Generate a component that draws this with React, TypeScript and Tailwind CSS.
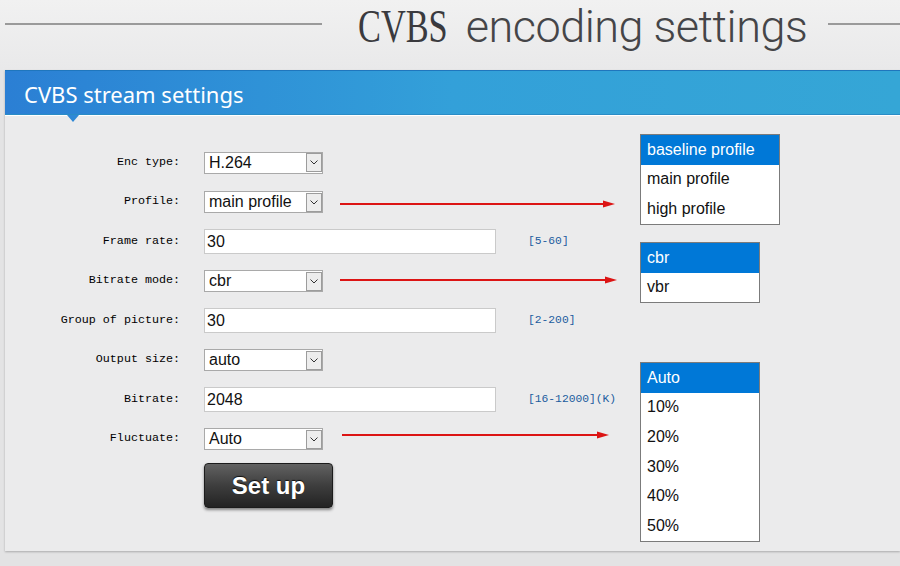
import React from "react";

const mono = { fontFamily: '"Liberation Mono", "DejaVu Sans Mono", monospace' };
const sans = { fontFamily: '"Liberation Sans", Arial, sans-serif' };

function Chevron() {
  return (
    <svg width="8" height="5" viewBox="0 0 8 5" className="block">
      <path d="M0.5 0.5 L4 4 L7.5 0.5" fill="none" stroke="#333" strokeWidth="1" />
    </svg>
  );
}

function Select({ value }: { value: string }) {
  return (
    <div className="w-[119px] h-[22px] border border-[#a9a9a9] bg-white flex items-center">
      <span className="pl-[4px] text-[16px] leading-none text-[#111] flex-1 whitespace-nowrap" style={sans}>
        {value}
      </span>
      <div className="w-[16px] h-[19px] border border-[#9c9c9c] bg-[#ededed] flex items-center justify-center">
        <Chevron />
      </div>
    </div>
  );
}

function Input({ value }: { value: string }) {
  return (
    <div className="w-[292px] h-[25px] border border-[#cacaca] bg-white flex items-center">
      <span className="pl-[2px] text-[16px] leading-none text-[#111]" style={sans}>
        {value}
      </span>
    </div>
  );
}

type Row = { label: string; kind: "select" | "input"; value: string; hint?: string };

const rows: Row[] = [
  { label: "Enc type:", kind: "select", value: "H.264" },
  { label: "Profile:", kind: "select", value: "main profile" },
  { label: "Frame rate:", kind: "input", value: "30", hint: "[5-60]" },
  { label: "Bitrate mode:", kind: "select", value: "cbr" },
  { label: "Group of picture:", kind: "input", value: "30", hint: "[2-200]" },
  { label: "Output size:", kind: "select", value: "auto" },
  { label: "Bitrate:", kind: "input", value: "2048", hint: "[16-12000](K)" },
  { label: "Fluctuate:", kind: "select", value: "Auto" },
];

function DropList({ items, className }: { items: string[]; className: string }) {
  return (
    <div className={"absolute border border-[#7b7b7b] bg-white " + className} style={sans}>
      {items.map((it, i) => (
        <div
          key={it}
          className={
            "h-[29.6px] flex items-center pl-[6px] text-[16px] leading-none " +
            (i === 0 ? "bg-[#0078d7] text-white" : "text-[#111]")
          }
        >
          {it}
        </div>
      ))}
    </div>
  );
}

export default function App() {
  return (
    <div className="relative w-[900px] h-[566px] overflow-hidden bg-[#e3e3e4]">
      {/* Title area */}
      <div className="h-[70px] bg-gradient-to-b from-[#f1f1f1] to-[#e9e9ea] flex items-start">
        <div className="shrink-0 ml-[5px] mt-[23px] w-[317px] h-[2px] bg-[#9a9a9a]" />
        <div className="shrink-0 ml-[36px] flex items-baseline whitespace-nowrap">
          <span
            className="inline-block shrink-0 mr-[-34px] origin-left scale-x-[0.73] text-[47px] leading-[53px] text-[#3a3a3e]"
            style={{ fontFamily: '"Liberation Serif", "Times New Roman", serif' }}
          >
            CVBS
          </span>
          <span
            className="shrink-0 ml-[19px] text-[45px] leading-[53px] font-light tracking-[-0.5px] text-[#454548]"
            style={{ fontFamily: 'Roboto, "Liberation Sans", sans-serif' }}
          >
            encoding settings
          </span>
        </div>
        <div className="shrink-0 mt-[23px] ml-auto w-[72px] h-[2px] bg-[#9a9a9a]" />
      </div>

      {/* Panel */}
      <div className="relative ml-[5px] w-[895px] h-[481px] bg-[#ebebec] shadow-[0_1px_2px_rgba(0,0,0,0.25)]">
        <div className="relative h-[45px] bg-gradient-to-r from-[#2b7fd4] via-[#33a0d9] to-[#35a6d6] border-t border-[#1f76bd] border-b border-b-[#2a8cc6]">
          <div
            className="pl-[19px] pt-[2px] text-[22px] leading-[43px] text-white whitespace-nowrap"
            style={{ fontFamily: '"Noto Sans", "Open Sans", sans-serif' }}
          >
            CVBS stream settings
          </div>
          <svg className="absolute left-[62px] top-[44px]" width="12" height="8" viewBox="0 0 12 8">
            <path d="M0 0 L6 7 L12 0 Z" fill="#2e88d6" />
          </svg>
        </div>
        <div className="h-px bg-white" />

        <div className="pt-[27px]">
          {rows.map((r) => (
            <div key={r.label} className="h-[39.5px] flex items-center">
              <div className="w-[175px] text-right text-[11.7px] text-[#000] whitespace-nowrap" style={mono}>
                {r.label}
              </div>
              <div className="ml-[24px]">{r.kind === "select" ? <Select value={r.value} /> : <Input value={r.value} />}</div>
              {r.hint && (
                <div className="ml-[32px] text-[11.3px] text-[#1b5c9e] whitespace-nowrap" style={mono}>
                  {r.hint}
                </div>
              )}
            </div>
          ))}
          <div className="ml-[199px] mt-[4px]">
            <button
              className="w-[129px] h-[45px] rounded-[4px] border border-[#1c1c1c] bg-gradient-to-b from-[#626262] via-[#3e3e3e] to-[#232323] shadow-[0_2px_3px_rgba(0,0,0,0.45)] text-white font-bold text-[24px] leading-none [text-shadow:0_-1px_1px_rgba(0,0,0,0.8)]"
              style={sans}
            >
              Set up
            </button>
          </div>
        </div>

        <DropList className="left-[635px] top-[64px] w-[140px]" items={["baseline profile", "main profile", "high profile"]} />
        <DropList className="left-[635px] top-[172px] w-[120px]" items={["cbr", "vbr"]} />
        <DropList className="left-[635px] top-[292px] w-[120px]" items={["Auto", "10%", "20%", "30%", "40%", "50%"]} />
      </div>

      {/* Arrows */}
      <svg className="absolute left-0 top-0 pointer-events-none" width="900" height="566" viewBox="0 0 900 566">
        <g fill="#dc1414" shapeRendering="crispEdges">
          <rect x="340" y="203" width="266" height="1.5" />
          <rect x="340" y="279" width="268" height="1.5" />
          <rect x="342" y="434" width="258" height="1.5" />
        </g>
        <g fill="#dc1414">
          <path d="M603 200.5 L615 204 L603 207.5 Z" />
          <path d="M605 276.5 L617 280 L605 283.5 Z" />
          <path d="M597 431.5 L609 435 L597 438.5 Z" />
        </g>
      </svg>
    </div>
  );
}
